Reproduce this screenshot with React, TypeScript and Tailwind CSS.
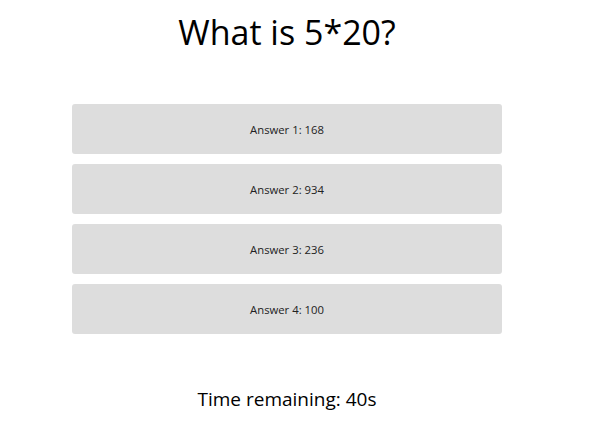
const answers = [168, 934, 236, 100];

export default function App() {
  return (
    <div
      className="flex h-[428px] w-[574px] flex-col items-center bg-white text-black"
      style={{ fontFamily: '"Open Sans", "Noto Sans", sans-serif' }}
    >
      <h1 className="mt-[11px] text-[34px] leading-[42px]">What is 5*20?</h1>
      <div className="mt-[51px] flex w-[430px] flex-col gap-[10px]">
        {answers.map((a, i) => (
          <button
            key={i}
            className="h-[50px] w-full rounded-[3px] bg-[#dddddd] pt-[2px] text-[11.3px] text-[#222]"
          >
            Answer {i + 1}: {a}
          </button>
        ))}
      </div>
      <p className="mt-[52px] text-[19px] leading-[26px]">Time remaining: 40s</p>
    </div>
  );
}
